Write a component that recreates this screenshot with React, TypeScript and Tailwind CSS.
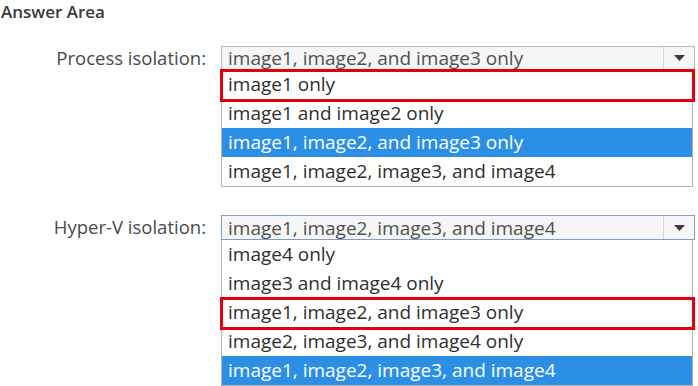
const font = { fontFamily: "'Open Sans', 'Noto Sans', sans-serif" }

type Opt = { text: string; selected?: boolean; marked?: boolean }

function Arrow() {
  return (
    <svg width="11" height="6" viewBox="0 0 11 6">
      <path d="M0 0 L11 0 L5.5 6 Z" fill="#3c3c3c" />
    </svg>
  )
}

function DropBlock({ label, value, options, focused, selectH }: { label: string; value: string; options: Opt[]; focused?: boolean; selectH: string }) {
  return (
    <div className="flex items-start">
      <div className="w-[207px] pr-[1px] text-right text-[18.5px] leading-[24px] text-[#4a4a4a]">{label}</div>
      <div className="ml-[14px] w-[474px]">
        <div
          className={
            "flex items-center border bg-[#f6f6f6] " +
            selectH +
            (focused ? " border-[#7f9dc9]" : " border-[#b9b9b9]")
          }>
          <div className="min-w-0 flex-1 whitespace-nowrap pl-[6px] text-[19px] leading-[20px] text-[#505050]">{value}</div>
          <div className="flex h-full w-[31px] items-center justify-center border-l border-[#d4d4d4]">
            <Arrow />
          </div>
        </div>
        <div className="w-[472px] border border-t-0 border-[#b4b4b4] bg-white">
          {options.map((o) => (
            <div
              key={o.text}
              className={
                "relative flex h-[29px] items-center pl-[6px] text-[19px] " +
                (o.selected ? "bg-[#2b8fe6] text-white" : "text-[#2e2e2e]")
              }>
              {o.text}
              {o.marked && (
                <div className="absolute -left-[2px] -right-[3px] -top-[1px] -bottom-[3px] border-[3px] border-[#e3000b]" />
              )}
            </div>
          ))}
        </div>
      </div>
    </div>
  )
}

export default function App() {
  return (
    <div className="h-[386px] w-[698px] overflow-hidden bg-white" style={font}>
      <div className="pl-[1px] pt-[1px] text-[17px] font-semibold leading-[22px] text-[#3a3a3a]">Answer Area</div>
      <div className="mt-[23px]">
        <DropBlock
          label="Process isolation:"
          value="image1, image2, and image3 only"
          selectH="h-[24px]"
          options={[
            { text: "image1 only", marked: true },
            { text: "image1 and image2 only" },
            { text: "image1, image2, and image3 only", selected: true },
            { text: "image1, image2, image3, and image4" }
          ]}
        />
      </div>
      <div className="mt-[28px]">
        <DropBlock
          label="Hyper-V isolation:"
          value="image1, image2, image3, and image4"
          selectH="h-[25px]"
          focused
          options={[
            { text: "image4 only" },
            { text: "image3 and image4 only" },
            { text: "image1, image2, and image3 only", marked: true },
            { text: "image2, image3, and image4 only" },
            { text: "image1, image2, image3, and image4", selected: true }
          ]}
        />
      </div>
    </div>
  )
}
